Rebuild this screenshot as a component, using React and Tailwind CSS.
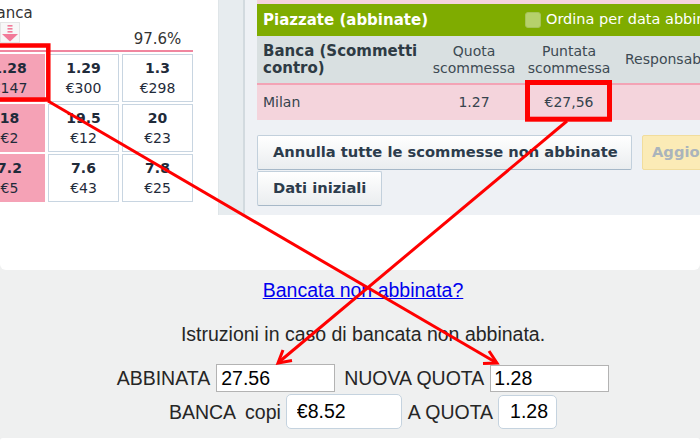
export default function App() {
  const rows = [
    [["1.28", "€147"], ["1.29", "€300"], ["1.3", "€298"]],
    [["18", "€2"], ["19.5", "€12"], ["20", "€23"]],
    [["7.2", "€5"], ["7.6", "€43"], ["7.8", "€25"]],
  ];
  return (
    <div className="relative w-[700px] h-[441px] overflow-hidden bg-[#eff0f0] flex flex-col">
      {/* top white card */}
      <div className="h-[270px] shrink-0 bg-white rounded-b-[6px] flex font-['DejaVu_Sans',Verdana,sans-serif] text-[#1f2b3a]">
        {/* left market grid */}
        <div className="w-[218px] shrink-0 overflow-hidden">
          <div className="-ml-[26px] w-[219px]">
            <div className="grid grid-cols-[71px_71px_71px] gap-x-[3px] h-[50px]">
              <div className="flex flex-col items-center pt-[4px]">
                <span className="text-[15px] leading-[18px] text-[#333]">Banca</span>
                <div className="w-[20px] h-[21px] border border-[#e4e4e4] bg-[#f7f7f7] flex items-center justify-center">
                  <svg width="18" height="19" viewBox="0 0 18 19">
                    <rect x="6.5" y="2" width="5" height="1.6" fill="#f27a98" />
                    <rect x="6.5" y="5" width="5" height="1.6" fill="#f27a98" />
                    <rect x="6.5" y="8" width="5" height="1.6" fill="#f27a98" />
                    <polygon points="1,11 17,11 9,18.5" fill="#f27a98" />
                  </svg>
                </div>
              </div>
              <div />
              <div className="flex items-end justify-center pb-[2px]">
                <span className="text-[15px] leading-[18px] text-[#333]">97.6%</span>
              </div>
            </div>
            <div className="h-[2px] bg-[#f0869f]" />
            <div className="grid grid-cols-[71px_71px_71px] gap-x-[3px] gap-y-[2px] mt-[2px]">
              {rows.map((r, i) =>
                r.map((c, j) => (
                  <div
                    key={i + "-" + j}
                    className={
                      j === 0
                        ? "h-[48px] bg-[#f5a2b6] flex flex-col items-center justify-center text-[14px] leading-[20px]"
                        : "h-[48px] bg-white border border-[#c8d5e1] flex flex-col items-center justify-center text-[14px] leading-[20px]"
                    }
                  >
                    <span className="font-bold">{c[0]}</span>
                    <span>{c[1]}</span>
                  </div>
                ))
              )}
            </div>
          </div>
        </div>

        {/* separator column */}
        <div className="w-[27px] shrink-0 h-[215px] bg-[#e7ecef] border-l border-[#dfe5e8] border-r-2 border-r-[#d2dadf]" />

        {/* right panel */}
        <div className="flex-1 h-[215px] bg-[#eef1f5] pl-[12px] overflow-hidden">
          <div className="h-[4px] bg-[#f4d4dc]" />
          <div className="h-[32px] bg-[#7fac00] flex items-center text-white whitespace-nowrap">
            <div className="w-[268px] shrink-0 pl-[6px] font-bold text-[15px]">Piazzate (abbinate)</div>
            <div className="w-[16px] h-[16px] shrink-0 rounded-[3px] bg-[#b6d16b] border border-[#a6c35a]" />
            <span className="ml-[5px] text-[14.5px]">Ordina per data abbinamento</span>
          </div>
          <div className="h-[47px] bg-[#d9e0e1] flex items-center whitespace-nowrap text-[#2e3b44]">
            <div className="w-[171px] shrink-0 pl-[6px] font-bold text-[15px] leading-[17px]">
              Banca (Scommetti
              <br />
              contro)
            </div>
            <div className="w-[92px] shrink-0 text-center text-[14px] leading-[17px] text-[#3d4a53]">
              Quota
              <br />
              scommessa
            </div>
            <div className="w-[98px] shrink-0 text-center text-[14px] leading-[17px] text-[#3d4a53]">
              Puntata
              <br />
              scommessa
            </div>
            <div className="pl-[7px] text-[14px] text-[#3d4a53]">Responsabilità</div>
          </div>
          <div className="h-[2px] bg-[#f3a3b5]" />
          <div className="h-[35px] bg-[#f4d4dc] flex items-center text-[14px] text-[#36434d] whitespace-nowrap">
            <div className="w-[171px] shrink-0 pl-[6px]">Milan</div>
            <div className="w-[92px] shrink-0 text-center">1.27</div>
            <div className="w-[98px] shrink-0 text-center">€27,56</div>
            <div className="pl-[7px]"></div>
          </div>
          <div className="mt-[15px] flex flex-col gap-[1px] whitespace-nowrap">
            <div className="flex gap-[10px]">
              <div className="w-[375px] h-[35px] shrink-0 flex items-center pl-[15px] rounded-[2px] border border-[#c2d0dc] border-b-[#a6b8c8] bg-gradient-to-b from-white to-[#eaedef] font-bold text-[14.7px] text-[#2c3c4c]">
                Annulla tutte le scommesse non abbinate
              </div>
              <div className="w-[110px] h-[35px] shrink-0 flex items-center pl-[9px] rounded-[2px] border border-[#f1dd9d] bg-[#fbebb6] font-bold text-[14.7px] text-[#aab4bc]">
                Aggiorna
              </div>
            </div>
            <div className="w-[125px] h-[35px] flex items-center pl-[15px] rounded-[2px] border border-[#c2d0dc] border-b-[#a6b8c8] bg-gradient-to-b from-white to-[#eaedef] font-bold text-[14.7px] text-[#2c3c4c]">
              Dati iniziali
            </div>
          </div>
        </div>
      </div>

      {/* bottom instructions */}
      <div className="flex flex-col items-center pl-[26px] font-['Liberation_Sans',Arial,sans-serif] text-[19.5px] leading-[22px] text-[#262626] whitespace-nowrap">
        <a className="mt-[9px] text-[#0000ee] underline">Bancata non abbinata?</a>
        <div className="mt-[22px]">Istruzioni in caso di bancata non abbinata.</div>
        <div className="mt-[19px] flex items-center">
          <span>ABBINATA</span>
          <input
            readOnly
            defaultValue="27.56"
            className="ml-[6px] w-[119px] h-[28px] border border-[#b3b3b3] bg-white px-[4px] text-[19.5px] text-black outline-none"
          />
          <span className="ml-[9px]">NUOVA QUOTA</span>
          <input
            readOnly
            defaultValue="1.28"
            className="ml-[6px] w-[119px] h-[27px] border border-[#b3b3b3] bg-white px-[3px] text-[19.5px] text-black outline-none"
          />
        </div>
        <div className="mt-[2px] flex items-center">
          <span>BANCA</span>
          <span className="ml-[9px]">copi</span>
          <input
            readOnly
            defaultValue="€8.52"
            className="ml-[5px] w-[116px] h-[35px] rounded-[5px] border border-[#c5d3df] bg-white pl-[10px] text-[19.5px] text-black outline-none"
          />
          <span className="ml-[6px]">A QUOTA</span>
          <input
            readOnly
            defaultValue="1.28"
            className="ml-[5px] w-[59px] h-[34px] rounded-[5px] border border-[#c5d3df] bg-white pl-[11px] text-[19.5px] text-black outline-none"
          />
        </div>
      </div>
      <div className="mt-auto h-[3px] shrink-0 bg-white rounded-t-[6px]" />

      {/* red annotations */}
      <svg className="absolute inset-0 pointer-events-none" width="700" height="441" viewBox="0 0 700 441">
        <rect x="-8" y="45.5" width="56.3" height="54" fill="none" stroke="#ff0000" strokeWidth="4.5" />
        <rect x="527.5" y="82.5" width="82" height="36.7" fill="none" stroke="#ff0000" strokeWidth="5" />
        <line x1="48" y1="101" x2="496" y2="362.5" stroke="#ff0000" strokeWidth="3" />
        <polyline points="489,351 497,363 483,363.5" fill="none" stroke="#ff0000" strokeWidth="3" />
        <line x1="567" y1="121" x2="279" y2="362" stroke="#ff0000" strokeWidth="3" />
        <polyline points="292,360.5 278,363 283,350" fill="none" stroke="#ff0000" strokeWidth="3" />
      </svg>
    </div>
  );
}
